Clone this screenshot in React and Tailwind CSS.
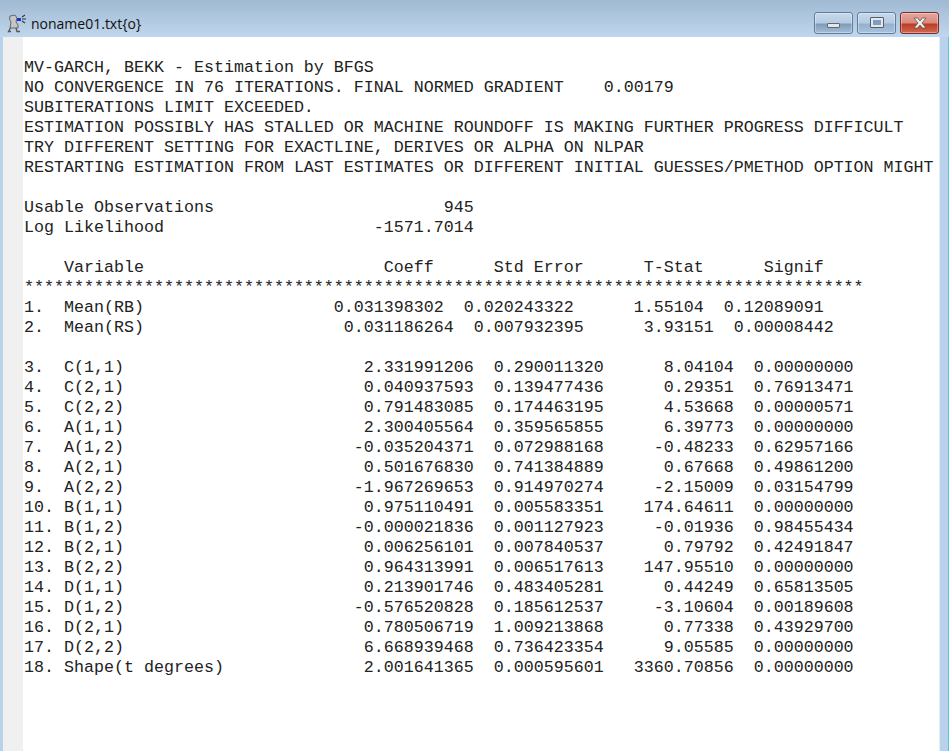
const rows = [
  ["3.  C(1,1)", "2.331991206", "0.290011320", "8.04104", "0.00000000"],
  ["4.  C(2,1)", "0.040937593", "0.139477436", "0.29351", "0.76913471"],
  ["5.  C(2,2)", "0.791483085", "0.174463195", "4.53668", "0.00000571"],
  ["6.  A(1,1)", "2.300405564", "0.359565855", "6.39773", "0.00000000"],
  ["7.  A(1,2)", "-0.035204371", "0.072988168", "-0.48233", "0.62957166"],
  ["8.  A(2,1)", "0.501676830", "0.741384889", "0.67668", "0.49861200"],
  ["9.  A(2,2)", "-1.967269653", "0.914970274", "-2.15009", "0.03154799"],
  ["10. B(1,1)", "0.975110491", "0.005583351", "174.64611", "0.00000000"],
  ["11. B(1,2)", "-0.000021836", "0.001127923", "-0.01936", "0.98455434"],
  ["12. B(2,1)", "0.006256101", "0.007840537", "0.79792", "0.42491847"],
  ["13. B(2,2)", "0.964313991", "0.006517613", "147.95510", "0.00000000"],
  ["14. D(1,1)", "0.213901746", "0.483405281", "0.44249", "0.65813505"],
  ["15. D(1,2)", "-0.576520828", "0.185612537", "-3.10604", "0.00189608"],
  ["16. D(2,1)", "0.780506719", "1.009213868", "0.77338", "0.43929700"],
  ["17. D(2,2)", "6.668939468", "0.736423354", "9.05585", "0.00000000"],
  ["18. Shape(t degrees)", "2.001641365", "0.000595601", "3360.70856", "0.00000000"],
];

const formatRow = ([label, coeff, err, tstat, signif]) =>
  label.padEnd(34 - (coeff.length - 11)) +
  coeff +
  "  " +
  err +
  tstat.padStart(13) +
  "  " +
  signif;

const output = [
  "MV-GARCH, BEKK - Estimation by BFGS",
  "NO CONVERGENCE IN 76 ITERATIONS. FINAL NORMED GRADIENT    0.00179",
  "SUBITERATIONS LIMIT EXCEEDED.",
  "ESTIMATION POSSIBLY HAS STALLED OR MACHINE ROUNDOFF IS MAKING FURTHER PROGRESS DIFFICULT",
  "TRY DIFFERENT SETTING FOR EXACTLINE, DERIVES OR ALPHA ON NLPAR",
  "RESTARTING ESTIMATION FROM LAST ESTIMATES OR DIFFERENT INITIAL GUESSES/PMETHOD OPTION MIGHT",
  "",
  "Usable Observations" + "945".padStart(26),
  "Log Likelihood" + "-1571.7014".padStart(31),
  "",
  "    Variable                        Coeff      Std Error      T-Stat      Signif",
  "*".repeat(84),
  "1.  Mean(RB)                   0.031398302  0.020243322      1.55104  0.12089091",
  "2.  Mean(RS)                    0.031186264  0.007932395      3.93151  0.00008442",
  "",
  ...rows.map(formatRow),
];

const WindowButton = ({ className, children }) => (
  <div
    className={`flex items-center justify-center w-[39px] h-[22px] rounded-[3px] border border-[#5f7d9c] shadow-[inset_0_0_0_1px_rgba(255,255,255,0.35)] ${className}`}
  >
    {children}
  </div>
);

export default function App() {
  return (
    <div className="w-[949px] h-[751px] overflow-hidden flex flex-col bg-[#b9d2ec]">
      <div className="h-[37px] shrink-0 flex items-center justify-between pl-[7px] pr-[10px] bg-gradient-to-b from-[#a0bad3] to-[#c0d6ec]">
        <div className="flex items-center gap-[4px] pt-[9px]">
          <svg width="20" height="20" viewBox="0 0 20 20">
            <path d="M3 3 L8 2 L10 5 L9 9 L11 12 L11 15 L3 15 L4 9 L2.5 6 Z" fill="#c6c6c6" stroke="#666" strokeWidth="1" />
            <path d="M3.5 15 L1.5 18.5 L4 18.5 M9 15 L10 18.5 L13 18.5" fill="none" stroke="#555" strokeWidth="1.3" />
            <rect x="10" y="5" width="4" height="3" fill="#2530c8" />
            <path d="M15 4 L18 2 M15 6 L19 6 M15 8 L18 10" stroke="#333" strokeWidth="1.1" />
          </svg>
          <span className="text-[14px] text-[#111] font-['Open_Sans','Liberation_Sans',sans-serif]">
            noname01.txt{"{o}"}
          </span>
        </div>
        <div className="flex items-center gap-[4px] mt-[8px]">
          <WindowButton className="bg-[linear-gradient(#c8d9ea_0%,#b4cbe2_50%,#7f9ab8_55%,#a5bfd9_100%)]">
            <div className="w-[13px] h-[5px] bg-[#e6e6e6] border border-[#5a6a7a] rounded-[1px] mt-[5px]" />
          </WindowButton>
          <WindowButton className="bg-[linear-gradient(#c8d9ea_0%,#b4cbe2_50%,#96b0cc_55%,#a9c3dd_100%)]">
            <div className="w-[14px] h-[11px] bg-[#e6e6e6] border border-[#4f5f70] rounded-[1px] flex items-center justify-center">
              <div className="w-[8px] h-[5px] bg-[#7d9ec4]" />
            </div>
          </WindowButton>
          <WindowButton className="border-[#7a2b2b] bg-[linear-gradient(#e3a79e_0%,#d88a7d_50%,#bc3a22_55%,#cf6a55_100%)]">
            <svg width="18" height="14" viewBox="0 0 18 14">
              <path
                d="M3 2 L6.5 2 L9 5 L11.5 2 L15 2 L11 7 L15 12 L11.5 12 L9 9 L6.5 12 L3 12 L7 7 Z"
                fill="#eeeeee"
                stroke="#5b4a4a"
                strokeWidth="0.7"
              />
            </svg>
          </WindowButton>
        </div>
      </div>
      <div className="flex-1 flex pl-[3px] bg-[#b9d2ec]">
        <div className="w-[20px] shrink-0 bg-[#f0f0f0]" />
        <pre className="w-[917px] m-0 pl-[1px] pt-[21px] text-[16.67px] leading-[20px] text-[#222] font-['Liberation_Mono','Courier_New',monospace] overflow-hidden bg-white border-r border-[#e6eef6]">
          {output.join("\n")}
        </pre>
        <div className="flex-1 border-r border-[#5cc0e0]" />
      </div>
    </div>
  );
}
